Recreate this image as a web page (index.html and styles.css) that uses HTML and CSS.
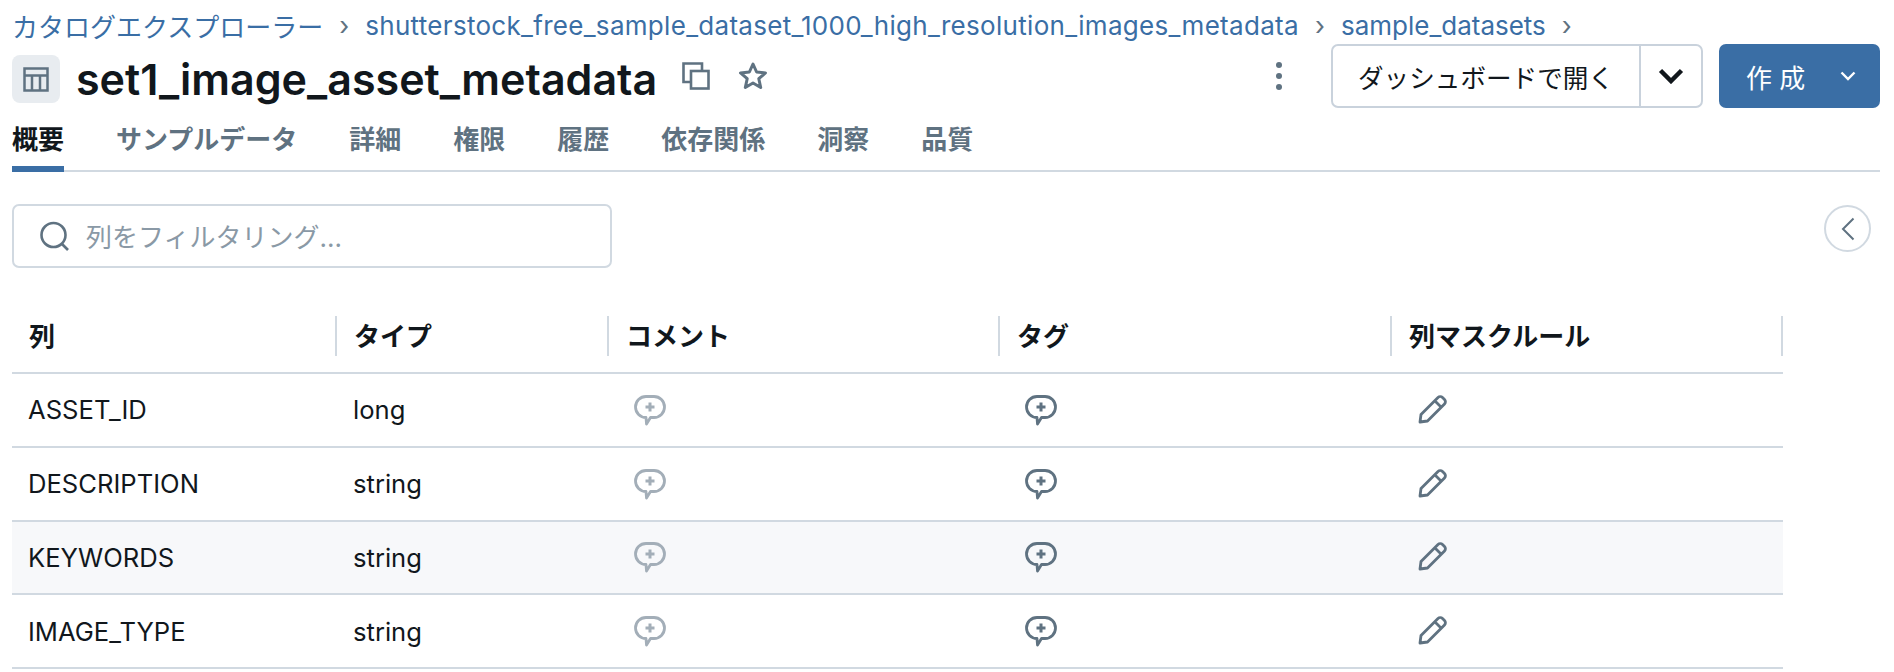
FILE: index.html
```html
<!DOCTYPE html>
<html lang="ja">
<head>
    <meta charset="UTF-8">
    <title>set1_image_asset_metadata</title>
    <link rel="stylesheet" href="styles.css">
</head>
<body>
<svg class="defs" width="0" height="0">
    <symbol id="iconComment" viewBox="0 0 32 32">
        <path d="M12 1.500h8a10.500 10.500 0 0 1 0 21h-3.500L12.500 29l-.5-6.500a10.500 10.500 0 0 1 0-21z" fill="none" stroke="currentColor" stroke-width="2.800" stroke-linejoin="round"/>
        <path d="M16 7.500v9M11.500 12h9" fill="none" stroke="currentColor" stroke-width="3"/>
    </symbol>
    <symbol id="iconPencil" viewBox="0 0 32 32">
        <path d="M3 29l1-7.500L21 4.500a3.200 3.200 0 0 1 4.500 0l2 2a3.200 3.200 0 0 1 0 4.500L10.500 28zM18 8l6 6" fill="none" stroke="currentColor" stroke-width="2.800" stroke-linejoin="round"/>
    </symbol>
</svg>

<nav class="breadcrumb">
    <a>カタログエクスプローラー</a><span class="sep">›</span>
    <a class="latin">shutterstock_free_sample_dataset_1000_high_resolution_images_metadata</a><span class="sep">›</span>
    <a>sample_datasets</a><span class="sep">›</span>
</nav>

<header class="titleBar">
    <div class="titleLeft">
        <span class="tableIcon">
            <svg width="26" height="25" viewBox="0 0 26 25" fill="none" stroke="currentColor" stroke-width="2.500"><rect x="1.500" y="1.500" width="23" height="22"/><path d="M1.500 8.500h23M9 8.500v15M17 8.500v15"/></svg>
        </span>
        <h1>set1_image_asset_metadata</h1>
        <svg class="copyIcon" width="28" height="28" viewBox="0 0 28 28" fill="none" stroke="currentColor" stroke-width="2.600"><path d="M8 20H1.500V1.500h18.500V8"/><rect x="9" y="9" width="17.500" height="17.500"/></svg>
        <svg class="starIcon" width="30" height="30" viewBox="0 0 30 30" fill="none" stroke="currentColor" stroke-width="3" stroke-linejoin="round"><path d="M15 3l3.600 8 8.900.900-6.700 5.800 1.900 8.800-7.700-4.500-7.700 4.500 1.900-8.800-6.700-5.800 8.900-.900z"/></svg>
    </div>
    <div class="titleRight">
        <span class="kebab"><i></i><i></i><i></i></span>
        <div class="splitBtn">
            <span class="splitMain">ダッシュボードで開く</span>
            <span class="splitArrow">
                <svg width="26" height="16" viewBox="0 0 26 16" fill="none" stroke="currentColor" stroke-width="4.500"><path d="M2.500 2.500L13 13 23.500 2.500"/></svg>
            </span>
        </div>
        <div class="createBtn">
            <span class="createText">作 成</span>
            <svg width="16" height="10" viewBox="0 0 16 10" fill="none" stroke="currentColor" stroke-width="2.400"><path d="M1.500 1.500L8 8l6.500-6.500"/></svg>
        </div>
    </div>
</header>

<ul class="tabs">
    <li class="active">概要</li>
    <li>サンプルデータ</li>
    <li>詳細</li>
    <li>権限</li>
    <li>履歴</li>
    <li>依存関係</li>
    <li>洞察</li>
    <li>品質</li>
</ul>

<div class="filterRow">
    <div class="search">
        <svg width="31" height="30" viewBox="0 0 31 30" fill="none" stroke="currentColor" stroke-width="2.600"><circle cx="14.500" cy="14" r="12"/><path d="M23 23l6 6"/></svg>
        <span>列をフィルタリング...</span>
    </div>
    <span class="collapse">
        <svg width="14" height="24" viewBox="0 0 14 24" fill="none" stroke="currentColor" stroke-width="2"><path d="M12.500 1.500L2 12l10.500 10.500"/></svg>
    </span>
</div>

<div class="table">
    <div class="row head">
        <div class="cell">列</div>
        <div class="cell">タイプ</div>
        <div class="cell">コメント</div>
        <div class="cell">タグ</div>
        <div class="cell">列マスクルール</div>
    </div>
    <div class="row">
        <div class="cell">ASSET_ID</div>
        <div class="cell">long</div>
        <div class="cell"><svg class="comment"><use href="#iconComment"/></svg></div>
        <div class="cell"><svg class="tag"><use href="#iconComment"/></svg></div>
        <div class="cell"><svg class="pencil"><use href="#iconPencil"/></svg></div>
    </div>
    <div class="row">
        <div class="cell">DESCRIPTION</div>
        <div class="cell">string</div>
        <div class="cell"><svg class="comment"><use href="#iconComment"/></svg></div>
        <div class="cell"><svg class="tag"><use href="#iconComment"/></svg></div>
        <div class="cell"><svg class="pencil"><use href="#iconPencil"/></svg></div>
    </div>
    <div class="row hover">
        <div class="cell">KEYWORDS</div>
        <div class="cell">string</div>
        <div class="cell"><svg class="comment"><use href="#iconComment"/></svg></div>
        <div class="cell"><svg class="tag"><use href="#iconComment"/></svg></div>
        <div class="cell"><svg class="pencil"><use href="#iconPencil"/></svg></div>
    </div>
    <div class="row">
        <div class="cell">IMAGE_TYPE</div>
        <div class="cell">string</div>
        <div class="cell"><svg class="comment"><use href="#iconComment"/></svg></div>
        <div class="cell"><svg class="tag"><use href="#iconComment"/></svg></div>
        <div class="cell"><svg class="pencil"><use href="#iconPencil"/></svg></div>
    </div>
</div>
</body>
</html>
```

FILE: styles.css
```css
*{
    margin:0;
    padding:0;
    box-sizing: border-box;
}
html,body{
    height: 672px;
    overflow: hidden;
}
body{
    padding: 0 14px 0 12px;
    background: #fff;
    color: #11171c;
    font-family: Inter, "Noto Sans CJK JP", sans-serif;
    font-size: 25.6px;
}
.defs{
    position: absolute;
}
.breadcrumb{
    display: flex;
    align-items: center;
    height: 29px;
    margin-top: 11px;
    color: #3a6ea5;
    font-size: 26px;
    white-space: nowrap;
}
.latin{
    letter-spacing: .3px;
}
.sep{
    color: #5f7281;
    margin: 0 16px;
}
.titleBar{
    display: flex;
    justify-content: space-between;
    height: 70px;
    margin-top: 4px;
}
.titleLeft,.titleRight{
    display: flex;
    align-items: center;
}
.titleRight{
    align-self: flex-start;
}
.tableIcon{
    display: flex;
    align-items: center;
    justify-content: center;
    width: 48px;
    height: 48px;
    border-radius: 8px;
    background: #e8ecf0;
    color: #5f7281;
}
h1{
    margin-left: 16px;
    font-size: 43px;
    font-weight: 600;
}
.copyIcon{
    margin-left: 25px;
    margin-top: -6px;
    color: #5f7281;
}
.starIcon{
    margin-left: 28px;
    margin-top: -6px;
    color: #5f7281;
}
.kebab{
    display: flex;
    flex-direction: column;
    gap: 5px;
    margin-right: 49px;
}
.kebab i{
    width: 6px;
    height: 6px;
    border-radius: 50%;
    background: #5f7281;
}
.splitBtn{
    display: flex;
    height: 64px;
    width: 372px;
    border: 2px solid #c9d2dc;
    border-radius: 7px;
}
.splitMain{
    display: flex;
    align-items: center;
    justify-content: center;
    width: 308px;
    border-right: 2px solid #c9d2dc;
}
.splitArrow{
    flex: 1;
    display: flex;
    align-items: center;
    justify-content: center;
}
.createBtn{
    display: flex;
    align-items: center;
    justify-content: space-between;
    height: 64px;
    width: 161px;
    margin-left: 16px;
    padding: 0 24px 0 27px;
    border-radius: 7px;
    background: #3a6ea5;
    color: #fff;
    font-size: 26px;
}
.tabs{
    display: flex;
    gap: 52px;
    height: 58px;
    border-bottom: 2px solid #d1d9e1;
    list-style: none;
    font-size: 26px;
    font-weight: 600;
    color: #5f7281;
}
.tabs li{
    height: 58px;
    padding-top: 8px;
    line-height: 36px;
}
.tabs .active{
    color: #11171c;
    border-bottom: 6px solid #3a6ea5;
}
.filterRow{
    display: flex;
    justify-content: space-between;
    align-items: flex-start;
    margin-top: 32px;
    padding-right: 9px;
}
.search{
    display: flex;
    align-items: center;
    gap: 16px;
    width: 600px;
    height: 64px;
    padding-left: 25px;
    padding-bottom: 1px;
    border: 2px solid #d1d9e1;
    border-radius: 7px;
    font-size: 26px;
    color: #8a99a6;
}
.search svg{
    color: #5f7281;
}
.collapse{
    display: flex;
    align-items: center;
    justify-content: center;
    width: 47px;
    height: 47px;
    margin-top: 1px;
    border: 2px solid #d1d9e1;
    border-radius: 50%;
    color: #5f7281;
}
.table{
    width: 1771px;
    margin-top: 48px;
}
.row{
    display: grid;
    grid-template-columns: 325px 272px 391px 392px 391px;
    height: 73.8px;
    border-bottom: 2px solid #d1d9e1;
    align-items: center;
}
.cell{
    display: flex;
    align-items: center;
    padding-left: 16px;
}
.head{
    height: 58px;
    align-items: start;
    font-weight: 600;
    font-size: 26px;
}
.head .cell{
    height: 40px;
    border-right: 2px solid #d1d9e1;
    padding-left: 17px;
    padding-bottom: 4px;
}
.hover{
    background: #f7f8fa;
}
.comment,.tag{
    width: 32px;
    height: 32px;
    margin-top: 2px;
    margin-left: 9px;
}
.comment{
    color: #a3aeb8;
}
.tag{
    margin-left: 9px;
    color: #5f7281;
}
.pencil{
    width: 32px;
    height: 32px;
    margin-top: -2px;
    margin-left: 9px;
    color: #5f7281;
}
```
